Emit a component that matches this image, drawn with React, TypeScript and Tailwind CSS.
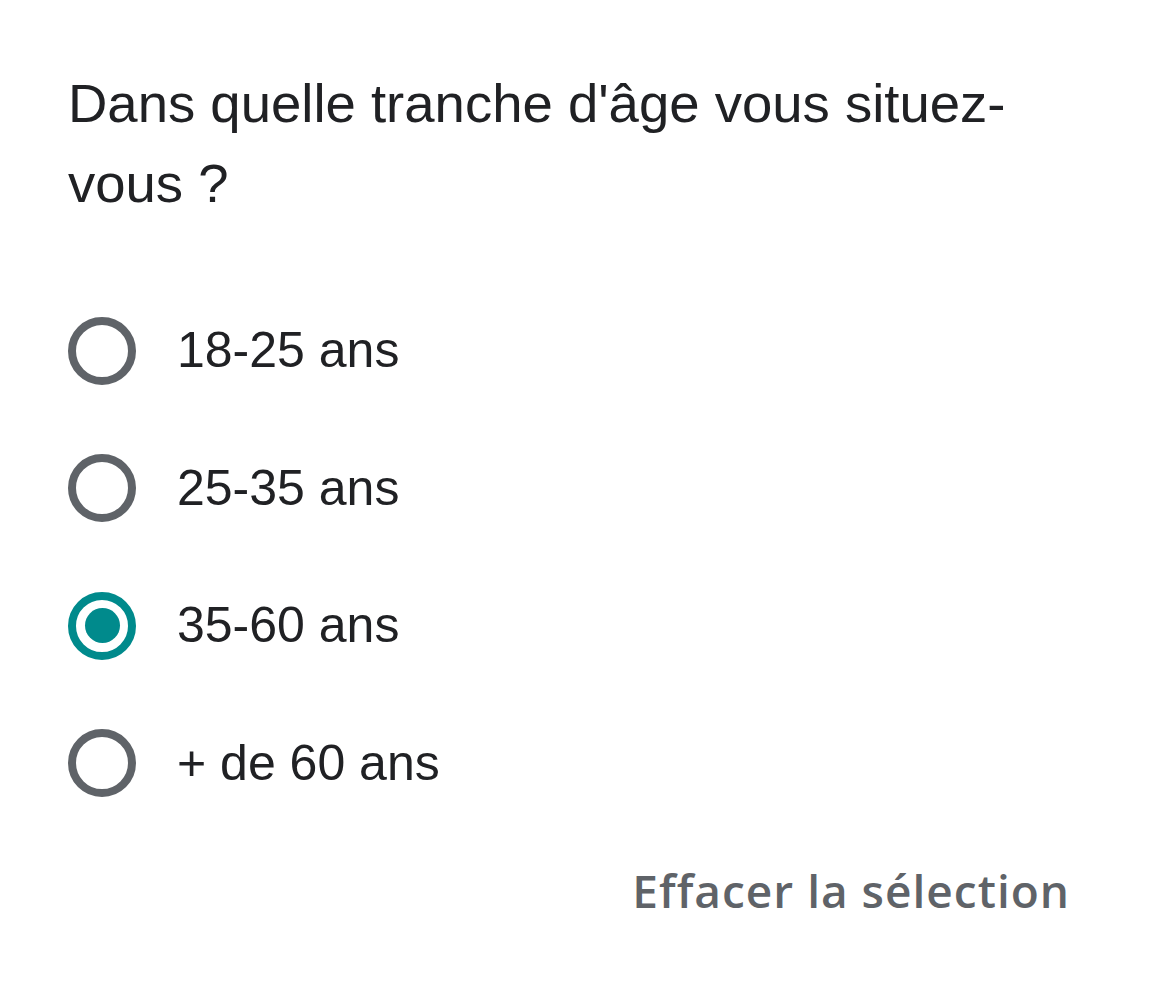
import React, { useState } from "react";

const options = ["18-25 ans", "25-35 ans", "35-60 ans", "+ de 60 ans"];

function Radio({ checked }: { checked: boolean }) {
  return (
    <span
      className={`flex h-[68px] w-[68px] shrink-0 items-center justify-center rounded-full border-[8px] ${
        checked ? "border-[#008a8c]" : "border-[#5f6368]"
      }`}
    >
      {checked && <span className="h-[35px] w-[35px] rounded-full bg-[#008a8c]" />}
    </span>
  );
}

export default function App() {
  const [selected, setSelected] = useState<number | null>(2);

  return (
    <div className="min-h-[983px] w-[1170px] bg-white pl-[68px] pr-[100px] pt-[64px]">
      <h1 className="font-['Liberation_Sans',Arial,sans-serif] text-[54.5px] font-normal leading-[80px] text-[#202124]">
        Dans quelle tranche d'âge vous situez-vous ?
      </h1>

      <div className="mt-[58px] flex flex-col">
        {options.map((label, i) => (
          <label
            key={label}
            className="flex h-[137.5px] cursor-pointer items-center gap-[41px]"
            onClick={() => setSelected(i)}
          >
            <Radio checked={selected === i} />
            <span className="font-['Liberation_Sans',Arial,sans-serif] text-[50px] text-[#202124]">
              {label}
            </span>
          </label>
        ))}
      </div>

      <div className="mt-[35px] flex justify-end">
        <button
          className="font-['Open_Sans',sans-serif] text-[46px] font-semibold leading-none tracking-[1px] text-[#5f6368]"
          onClick={() => setSelected(null)}
        >
          Effacer la sélection
        </button>
      </div>
    </div>
  );
}
